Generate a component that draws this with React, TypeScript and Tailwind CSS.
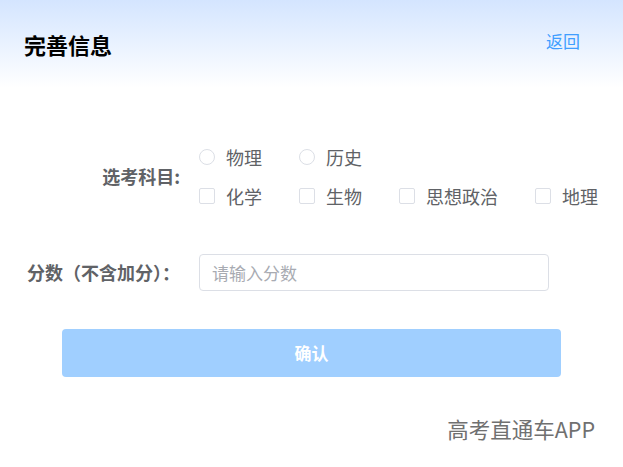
const FONT = { fontFamily: '"Microsoft YaHei", "Noto Sans CJK SC", "Noto Sans", sans-serif' };

const RADIOS = ['物理', '历史'];
const CHECKS = ['化学', '生物', '思想政治', '地理'];

function Radio({ label }: { label: string }) {
  return (
    <label className="flex shrink-0 items-center whitespace-nowrap mr-[37px] text-[18px] text-[#606266]">
      <span className="shrink-0 w-4 h-4 rounded-full border border-[#dcdfe6] bg-white" />
      <span className="ml-[11px]">{label}</span>
    </label>
  );
}

function Check({ label }: { label: string }) {
  return (
    <label className="flex shrink-0 items-center whitespace-nowrap mr-[37px] text-[18px] text-[#606266]">
      <span className="shrink-0 w-4 h-4 rounded-[2px] border border-[#dcdfe6] bg-white" />
      <span className="ml-[11px]">{label}</span>
    </label>
  );
}

export default function App() {
  return (
    <div className="w-[623px] h-[467px] bg-white overflow-hidden" style={FONT}>
      <div className="h-[88px] bg-gradient-to-b from-[#d4e5ff] to-white flex items-center justify-between pl-6 pr-[43px]">
        <h1 className="text-[22px] font-bold text-black">完善信息</h1>
        <span className="text-[17px] text-[#409eff] -mt-[6px]">返回</span>
      </div>

      <div className="mt-[53px] flex">
        <div className="w-[180px] shrink-0 text-right self-center font-bold text-[18px] text-[#606266]">选考科目:</div>
        <div className="ml-[19px] flex flex-col gap-[7px]">
          <div className="flex h-8 items-center">
            {RADIOS.map((r) => (
              <Radio key={r} label={r} />
            ))}
          </div>
          <div className="flex h-8 items-center">
            {CHECKS.map((c) => (
              <Check key={c} label={c} />
            ))}
          </div>
        </div>
      </div>

      <div className="mt-[42px] flex items-center">
        <div className="w-[180px] shrink-0 text-right font-bold text-[18px] text-[#606266]">分数（不含加分）：</div>
        <input
          className="ml-[19px] w-[350px] h-[37px] rounded border border-[#dcdfe6] px-3 text-[17px] text-[#606266] outline-none placeholder:text-[#a8abb2]"
          placeholder="请输入分数"
        />
      </div>

      <button className="mt-[38px] ml-[62px] w-[499px] h-[48px] rounded bg-[#a0cfff] text-white font-bold text-[17px]">
        确认
      </button>

      <div className="mt-[36px] pr-[28px] text-right text-[21.5px] text-[#707070]">高考直通车APP</div>
    </div>
  );
}
